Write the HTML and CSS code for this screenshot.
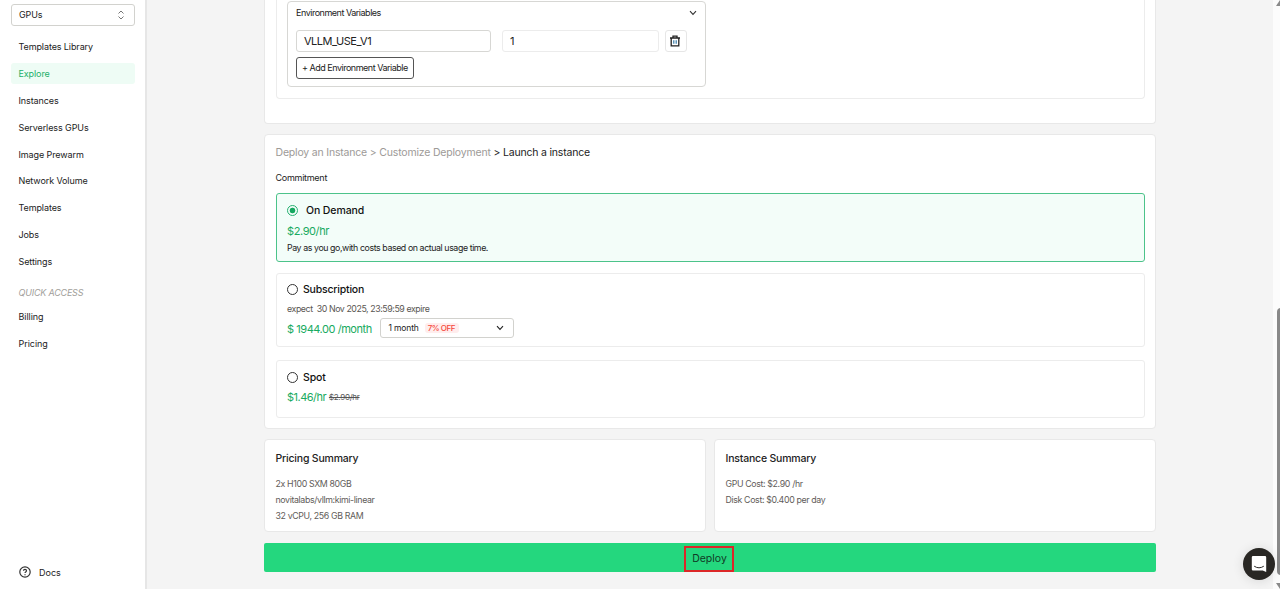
FILE: index.html
```html
<!DOCTYPE html>
<html lang="en">
<head>
<meta charset="utf-8">
<title>Deploy an Instance</title>
<link rel="stylesheet" href="styles.css">
</head>
<body>
<div class="app">
  <aside class="sidebar">
    <div class="product-select"><span>GPUs</span>
      <svg class="sort-icon" viewBox="0 0 8 10"><path d="M1.5 3.5 4 1l2.5 2.5M1.5 6.5 4 9l2.5-2.5"/></svg>
    </div>
    <nav class="nav">
      <a class="nav-item">Templates Library</a>
      <a class="nav-item active">Explore</a>
      <a class="nav-item">Instances</a>
      <a class="nav-item">Serverless GPUs</a>
      <a class="nav-item">Image Prewarm</a>
      <a class="nav-item">Network Volume</a>
      <a class="nav-item">Templates</a>
      <a class="nav-item">Jobs</a>
      <a class="nav-item">Settings</a>
    </nav>
    <div class="nav-heading">QUICK ACCESS</div>
    <nav class="nav quick">
      <a class="nav-item">Billing</a>
      <a class="nav-item">Pricing</a>
    </nav>
    <a class="docs">
      <svg class="help-icon" viewBox="0 0 12 12"><circle cx="6" cy="6" r="5.2"/><path d="M4.5 4.8C4.5 3 7.5 3 7.5 4.8 7.5 6 6 5.9 6 7.1M6 8.2v1"/></svg>
      <span>Docs</span>
    </a>
  </aside>
  <main class="main">
    <section class="card config-card">
      <div class="config-panel">
        <div class="env-box">
          <div class="env-head"><span class="env-title">Environment Variables</span>
            <svg class="chevron" viewBox="0 0 8 6"><path d="M1 1.2 4 4.4l3-3.2"/></svg>
          </div>
          <div class="env-row">
            <div class="field key">VLLM_USE_V1</div>
            <div class="field value">1</div>
            <div class="trash">
              <svg viewBox="0 0 12 12"><path d="M1 3h10M4 2.8V1.1h4v1.7M2.2 3.2v7.6h7.6V3.2"/><path class="bars" d="M4.8 5.2v3.6M7.2 5.2v3.6"/></svg>
            </div>
          </div>
          <div class="add-env">+ Add Environment Variable</div>
        </div>
      </div>
    </section>
    <section class="card launch-card">
      <div class="crumbs"><span class="muted">Deploy an Instance &gt; Customize Deployment</span> &gt; Launch a instance</div>
      <div class="label">Commitment</div>
      <div class="option demand">
        <div class="option-title"><i class="radio checked"></i><span>On Demand</span></div>
        <div class="price">$2.90/hr</div>
        <div class="hint">Pay as you go,with costs based on actual usage time.</div>
      </div>
      <div class="option subscription">
        <div class="option-title"><i class="radio"></i><span class="plan-name">Subscription</span></div>
        <div class="expire">expect&nbsp; 30 Nov 2025, 23:59:59 expire</div>
        <div class="month-row"><span class="month-price">$ 1944.00 /month</span>
          <div class="term"><span class="term-name">1 month</span><span class="discount">7% OFF</span>
            <svg class="chevron" viewBox="0 0 8 6"><path d="M1 1.2 4 4.4l3-3.2"/></svg>
          </div>
        </div>
      </div>
      <div class="option spot">
        <div class="option-title"><i class="radio"></i><span>Spot</span></div>
        <div class="spot-row"><span class="price">$1.46/hr</span><s>$2.90/hr</s></div>
      </div>
    </section>
    <div class="summaries">
      <section class="card summary">
        <h2>Pricing Summary</h2>
        <p>2x H100 SXM 80GB</p>
        <p>novitalabs/vllm:kimi-linear</p>
        <p>32 vCPU, 256 GB RAM</p>
      </section>
      <section class="card summary">
        <h2>Instance Summary</h2>
        <p>GPU Cost: $2.90 /hr</p>
        <p>Disk Cost: $0.400 per day</p>
      </section>
    </div>
    <div class="deploy"><span class="deploy-label">Deploy</span></div>
  </main>
  <div class="scrollbar">
    <svg class="arrow" viewBox="0 0 7 6"><path d="M3 6 7 0v6z"/></svg>
    <div class="thumb"></div>
    <svg class="arrow" viewBox="0 0 7 6"><path d="M3 0h4v6z"/></svg>
  </div>
</div>
<div class="chat">
  <svg viewBox="0 0 16 18"><path class="bubble" d="M2 1h12a1.2 1.2 0 0 1 1.2 1.2V17l-3.4-1.6H2A1.2 1.2 0 0 1 .8 14.2v-12A1.2 1.2 0 0 1 2 1z"/><path class="smile" d="M3.2 11.2Q8 14.4 12.8 11.2"/></svg>
</div>
</body>
</html>
```
FILE: styles.css
```css
* { box-sizing: border-box; }
body { margin: 0; background: #f4f4f4; font-family: Inter, "Liberation Sans", sans-serif; font-size: 9px; color: #222; }
svg { fill: none; stroke: #333; display: block; flex: none; }
h2, p { margin: 0; }
.app { display: flex; height: 589px; overflow: hidden; }
.sidebar { width: 147px; flex: none; background: #fff; border-right: 2px solid #e6e6e6; padding: 4px 10px 0 11px; display: flex; flex-direction: column; white-space: nowrap; }
.product-select { height: 22px; width: 124px; border: 1px solid #d2d2ce; border-radius: 3px; display: flex; align-items: center; justify-content: space-between; padding: 0 9px 1px 7px; letter-spacing: -.1px; }
.sort-icon { width: 8px; height: 10px; stroke: #666; stroke-width: .9; }
.nav { margin-top: 10.4px; display: flex; flex-direction: column; gap: 5.8px; letter-spacing: -.1px; }
.nav-item { height: 21px; line-height: 21px; width: 124px; padding-left: 7.5px; border-radius: 3px; }
.nav-item.active { background: #eefcf5; color: #1bb069; }
.nav-heading { margin: 15.6px 0 0 7.5px; height: 12px; line-height: 12px; font-style: italic; color: #a19e9a; letter-spacing: -.2px; }
.nav.quick { margin-top: 6.6px; letter-spacing: -.05px; }
.docs { display: flex; align-items: center; gap: 8px; margin: auto 0 10.5px 8px; height: 13px; }
.help-icon { width: 12px; height: 12px; stroke-width: 1.2; }
.main { flex: none; width: 892px; margin-left: 117px; }
.card { background: #fff; border: 1px solid #e8e8e8; border-radius: 4px; }
.config-card { height: 124px; border-top: 0; border-radius: 0 0 4px 4px; padding: 0 10px 0 11px; }
.config-panel { height: 99px; border: 1px solid #ececec; border-top: 0; border-radius: 0 0 4px 4px; padding: 1px 0 0 10px; }
.env-box { width: 419px; height: 86px; border: 1px solid #d7d7d4; border-radius: 4px; padding: 4px 8px; }
.env-head { display: flex; align-items: center; justify-content: space-between; height: 13px; letter-spacing: -.48px; }
.chevron { width: 8px; height: 6px; stroke-width: 1.1; }
.env-row { display: flex; margin-top: 11px; height: 22px; }
.field { border: 1px solid #d7d7d4; border-radius: 3px; line-height: 20px; padding-left: 7px; font-size: 11px; letter-spacing: -.5px; }
.key { width: 195px; margin-right: 11px; }
.value { width: 157px; margin-right: 6px; border-color: #ececec; }
.trash { width: 22px; border: 1px solid #e6e6e6; border-radius: 3px; display: flex; align-items: center; justify-content: center; padding-right: 2px; }
.trash svg { width: 12px; height: 12px; stroke-width: 1.3; stroke: #222; }
.trash .bars { stroke: #377ca9; stroke-width: 1.2; }
.add-env { width: 118px; height: 22px; margin-top: 5px; border: 1px solid #555; border-radius: 3px; line-height: 20px; padding-left: 5px; white-space: nowrap; letter-spacing: -.49px; }
.launch-card { margin-top: 10px; height: 295px; padding: 10px 10px 0 11px; white-space: nowrap; }
.crumbs { height: 16px; line-height: 16px; font-size: 10.5px; letter-spacing: -.19px; margin-left: -.5px; }
.muted { color: #9d9a97; }
.label { height: 13px; line-height: 13px; margin: 10px 0 0 -.5px; letter-spacing: -.27px; }
.option { border: 1px solid #ececec; border-radius: 3px; padding: 8px 0 0 10px; color: #222; }
.option-title { display: flex; align-items: center; gap: 5px; height: 15px; font-size: 10.5px; font-weight: 500; color: #111; letter-spacing: -.1px; }
.plan-name { letter-spacing: -.2px; }
.radio { width: 11px; height: 11px; border: 1px solid #333; border-radius: 50%; flex: none; }
.radio.checked { border-color: #25b070; background: radial-gradient(circle, #16a860 0 2.5px, transparent 3.2px); margin-right: 3px; }
.demand { height: 69px; margin-top: 9px; padding-top: 9px; background: #f3fdf9; border-color: #4cc38a; }
.price { font-size: 11px; color: #18aa60; line-height: 14px; letter-spacing: -.4px; }
.demand .price { margin-top: 6px; }
.hint { margin-top: 4px; line-height: 12px; font-size: 8.8px; letter-spacing: -.41px; }
.subscription { height: 74px; margin-top: 11px; }
.expire { margin-top: 6px; height: 12px; line-height: 12px; color: #595652; font-size: 8.8px; letter-spacing: -.42px; }
.month-row { display: flex; margin-top: 3px; height: 20px; align-items: center; }
.month-price { width: 93px; font-size: 11px; color: #18aa60; letter-spacing: -.45px; padding-top: 1px; }
.term { width: 134px; height: 20px; border: 1px solid #d2d2ce; border-radius: 3px; display: flex; align-items: center; padding: 0 9px 1px 7.5px; font-size: 8.5px; letter-spacing: -.15px; }
.discount { margin-left: 6px; height: 10px; line-height: 10px; padding: 0 4px 0 3px; background: #ffeded; color: #f5483b; border-radius: 3px; font-size: 8px; font-weight: 500; letter-spacing: -.5px; }
.term .chevron { margin-left: auto; stroke: #222; }
.spot { height: 58px; margin-top: 13px; padding-top: 8.5px; }
.spot-row { display: flex; align-items: center; margin-top: 5.5px; height: 14px; }
.spot-row .price { letter-spacing: -.52px; }
.spot-row s { margin-left: 2.8px; font-size: 8px; color: #555; letter-spacing: -.28px; }
.summaries { display: flex; gap: 8px; margin-top: 10px; }
.summary { width: 442px; height: 93px; padding: 11px 10.5px; white-space: nowrap; }
.summary h2 { font-size: 10.5px; line-height: 15px; font-weight: 500; color: #222; margin-bottom: 10px; letter-spacing: -.2px; }
.summary p { line-height: 16px; font-size: 8.8px; color: #5f5c59; letter-spacing: -.36px; }
.deploy { margin-top: 11px; height: 29px; border-radius: 2px; background: #24d77e; display: flex; justify-content: center; padding: 3px 2px 0 0; }
.deploy-label { width: 50px; height: 26px; border: 2px solid #dc2727; line-height: 21px; text-align: center; font-size: 10.5px; color: #113a25; padding-left: 1px; }
.scrollbar { margin-left: auto; width: 7px; background: #fcfcfc; display: flex; flex-direction: column; }
.arrow { width: 7px; height: 6px; stroke: none; fill: #8a8a8a; }
.thumb { width: 4px; height: 267px; margin: 302px 0 8px 3.5px; background: #898989; border-radius: 4px 0 0 4px; }
.chat { position: absolute; left: 1243px; top: 548px; width: 32px; height: 32px; border-radius: 50%; background: #292724; box-shadow: 0 1px 12px rgba(0,0,0,.12); display: flex; align-items: center; justify-content: center; }
.chat svg { width: 16px; height: 18px; stroke: none; }
.bubble { fill: #fff; }
.chat .smile { stroke: #292724; stroke-width: 1; }
```
